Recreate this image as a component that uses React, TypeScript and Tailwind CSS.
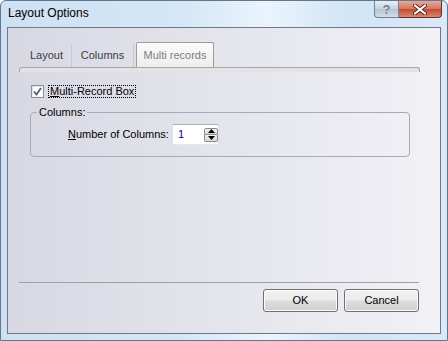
import React from 'react';

const CheckMark = () => (
  <svg width="9" height="9" viewBox="0 0 9 9">
    <path d="M1 4.5 L3.5 7.5 L8 1" fill="none" stroke="#4b5f86" strokeWidth="1.8" />
  </svg>
);

const Arrow = ({ up }: { up: boolean }) => (
  <svg width="7" height="4" viewBox="0 0 7 4">
    <path d={up ? 'M0 4 L3.5 0 L7 4 Z' : 'M0 0 L3.5 4 L7 0 Z'} fill="#000" />
  </svg>
);

const WinButton: React.FC<{ children: React.ReactNode }> = ({ children }) => (
  <button className="flex h-[23px] w-[75px] items-center justify-center rounded-[3px] border border-[#707070] bg-[linear-gradient(to_bottom,#f2f2f2_0%,#ebebeb_48%,#dddddd_52%,#cfcfcf_100%)] text-[11px] leading-none text-black shadow-[inset_0_0_0_1px_#fcfcfc]">
    {children}
  </button>
);

/**
 * Diálogo "Layout Options" no estilo Vista
 */
export default function App() {
  return (
    <div className="flex h-[341px] w-[448px] flex-col overflow-hidden rounded-t-[6px] border border-[#5d7891] bg-[linear-gradient(to_right,#cfe0f2_0%,#d5e6f6_40%,#ebf4fc_60%,#d2e4f5_78%,#dbe9f7_100%)] font-['Liberation_Sans',Arial,sans-serif] text-[11px] text-black">
      {/* barra de título */}
      <div className="flex h-[26px] shrink-0 items-start">
        <span className="pl-[7px] pt-[5px] text-[12px] leading-[15px]">Layout Options</span>
        <div className="ml-auto mr-[5px] flex h-[17px]">
          <div className="flex w-[25px] items-center justify-center rounded-bl-[4px] border border-t-0 border-[#6e8196] bg-[linear-gradient(to_bottom,#e9eff5,#c5d2de_50%,#b2c3d3_51%,#d2dde7)] text-[13px] font-bold leading-none text-[#6b7a8a] [text-shadow:0_0_1px_#fff]">
            ?
          </div>
          <div className="flex w-[43px] items-center justify-center rounded-br-[4px] border border-l-0 border-t-0 border-[#6b2d23] bg-[linear-gradient(to_bottom,#e6ab9c,#d47560_50%,#c5472f_51%,#d98a70)]">
            <svg width="14" height="11" viewBox="0 0 14 11">
              <path d="M2 1.5 L12 9.5 M12 1.5 L2 9.5" stroke="#5a2a20" strokeWidth="4" strokeLinecap="round" />
              <path d="M2 1.5 L12 9.5 M12 1.5 L2 9.5" stroke="#ffffff" strokeWidth="2.2" strokeLinecap="round" />
            </svg>
          </div>
        </div>
      </div>

      {/* área do cliente */}
      <div className="mx-[6px] mb-[6px] flex flex-1 flex-col border border-[#6d7888] bg-linear-to-r from-[#d8d8e3] to-[#f1f1f6]">
        {/* abas */}
        <div className="mt-[14px] flex h-[25px] items-end pl-[14px]">
          <div className="flex h-[23px] w-[50px] items-center justify-center border-r border-[#c9c9d3] text-[#3c3c3c]">
            Layout
          </div>
          <div className="flex h-[23px] w-[62px] items-center justify-center border-r border-[#c9c9d3] text-[#3c3c3c]">
            Columns
          </div>
          <div className="ml-[2px] flex h-[25px] w-[78px] items-center justify-center rounded-t-[2px] border border-b-0 border-[#9c9c9c] bg-[linear-gradient(to_bottom,#fbfbfb,#eeeef0)] text-[#7d7d7d]">
            Multi records
          </div>
        </div>
        <div className="ml-[11px] mr-[20px] h-[5px] rounded-t-[3px] border border-b-0 border-[#a6a6a6] bg-[#e3e3e5]" />

        {/* checkbox */}
        <div className="mt-[13px] flex items-center pl-[23px]">
          <div className="flex h-[13px] w-[13px] items-center justify-center border border-[#8e8f8f] bg-[linear-gradient(to_bottom_right,#dcdcdc,#ffffff)]">
            <div className="flex h-[9px] w-[9px] items-center justify-center bg-white">
              <CheckMark />
            </div>
          </div>
          <div className="ml-[4px] border border-dotted border-black px-[1px] leading-[11px]">
            <span className="underline underline-offset-1">M</span>ulti-Record Box
          </div>
        </div>

        {/* grupo Columns */}
        <fieldset className="ml-[22px] mt-[8px] w-[380px] rounded-[4px] border border-[#a5acb4]">
          <legend className="ml-[6px] px-[2px] leading-[13px]">Columns:</legend>
          <div className="flex items-center pb-[11px] pl-[37px] pt-[5px]">
            <span className="w-[104px] whitespace-nowrap">
              <span className="underline underline-offset-1">N</span>umber of Columns:
            </span>
            <div className="flex h-[21px] w-[47px] items-center border border-[#dbdfe6] border-t-[#abadb3] border-b-[#e3e9ef] bg-white pl-[5px]">
              <span className="flex-1 text-[#000080]">1</span>
              <div className="flex flex-col">
                <div className="flex h-[7px] w-[14px] items-center justify-center rounded-t-[2px] border border-[#8c8c8c] bg-[linear-gradient(to_bottom,#f4f4f4,#d6d6d6)]">
                  <Arrow up />
                </div>
                <div className="flex h-[7px] w-[14px] items-center justify-center rounded-b-[2px] border border-t-0 border-[#8c8c8c] bg-[linear-gradient(to_bottom,#f4f4f4,#d6d6d6)]">
                  <Arrow up={false} />
                </div>
              </div>
            </div>
          </div>
        </fieldset>

        <div className="flex-1" />

        {/* separador e botões */}
        <div className="ml-[11px] mr-[21px] h-px bg-[#a0a0a0]" />
        <div className="mt-[6px] flex justify-end gap-[6px] pb-[21px] pr-[21px]">
          <WinButton>OK</WinButton>
          <WinButton>Cancel</WinButton>
        </div>
      </div>
    </div>
  );
}
